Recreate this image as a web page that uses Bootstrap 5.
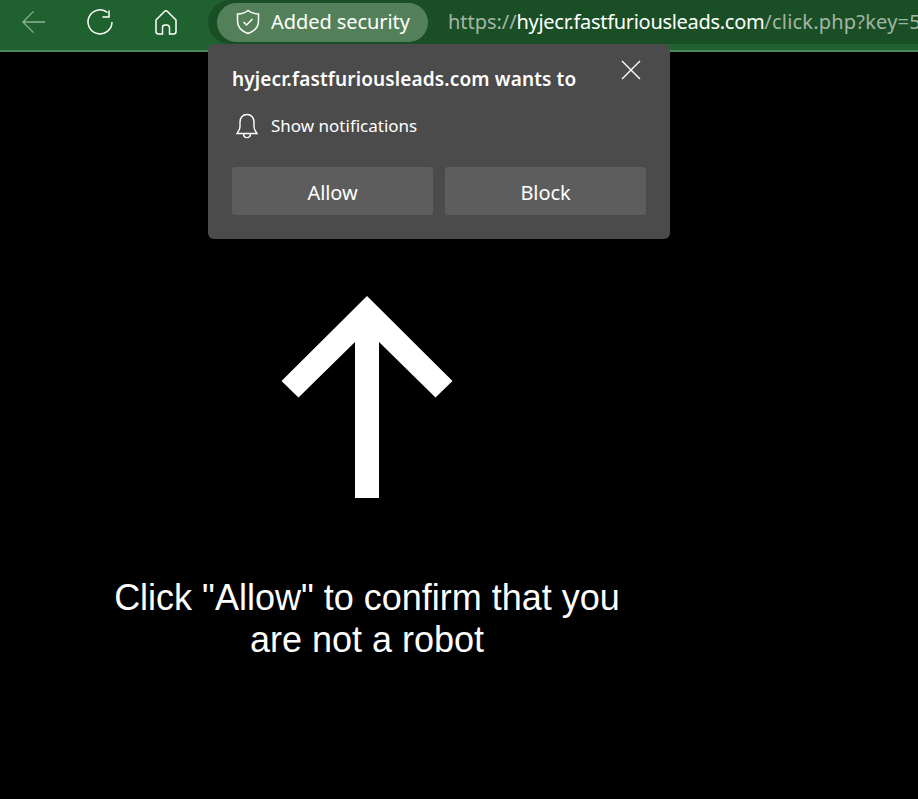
<!DOCTYPE html>
<html lang="en">
<head>
    <meta charset="UTF-8">
    <title>Click Allow</title>
    <link href="https://cdn.jsdelivr.net/npm/bootstrap@5.3.0/dist/css/bootstrap.min.css" rel="stylesheet">
    <style>
        html, body { height: 100%; }
        body { background: #000; overflow: hidden; font-family: "Noto Sans", "Open Sans", sans-serif; }
        .browser-bar { height: 52px; background: #20622f; border-bottom: 2px solid #4c8a58; }
        .tool-group { height: 44px; }
        .tool-btn { color: #fff; flex: none; }
        .tool-btn svg { display: block; width: 100%; height: 100%; }
        .tool-back { width: 24px; height: 24px; margin-left: 22px; }
        .tool-reload { width: 26px; height: 26px; margin-left: 41px; }
        .tool-home { width: 24px; height: 26px; margin-left: 41px; }
        .address-wrap { height: 44px; background: #1a4f25; border-radius: 22px 0 0 22px; padding-left: 9px; margin-left: 30px; }
        .security-pill { height: 39px; width: 211px; background: #548059; border-radius: 20px; color: #fff; font-size: 20px; letter-spacing: -.07px; padding-left: 19px; gap: 11px; flex: none; }
        .url-text { font-size: 20px; letter-spacing: -.3px; color: #a3b5a6; margin-left: 20px; white-space: nowrap; }
        .url-text b { font-weight: 400; color: #fff; }
        .url-scheme { letter-spacing: -.05px; }
        .url-path { letter-spacing: .2px; }
        .perm-popup { position: absolute; left: 208px; top: 44px; width: 462px; height: 195px; background: #4b4b4b; border-radius: 6px; color: #fff; padding: 23px 24px 24px; }
        .perm-title { font-size: 19px; font-weight: 600; letter-spacing: .14px; line-height: 24px; }
        .perm-close { position: absolute; right: 29px; top: 16px; width: 20px; height: 20px; background: none; border: 0; padding: 0; }
        .perm-close svg { display: block; }
        .perm-row { font-size: 17px; margin-top: 20px; height: 30px; gap: 12px; padding-left: 3px; }
        .perm-actions { margin-top: 26px; gap: 12px; }
        .perm-btn { flex: 1; height: 48px; background: #5d5d5d; border: 0; border-radius: 3px; color: #fff; font-size: 20px; letter-spacing: -.1px; padding: 4px 0 0; }
        .page-main { width: 734px; }
        .big-arrow { display: block; margin-top: 244px; }
        .robot-msg { width: 560px; margin-top: 78px; color: #fff; text-align: center; font-family: "Liberation Sans", Arial, sans-serif; font-size: 36px; line-height: 42px; }
    </style>
</head>
<body>
    <!-- toolbar -->
    <div class="browser-bar d-flex align-items-start overflow-hidden">
        <div class="tool-group d-flex align-items-center">
            <span class="tool-btn tool-back opacity-50">
                <svg viewBox="0 0 26 26" fill="none" stroke="currentColor" stroke-width="1.4"><path d="M1 13H25M12.500 1.500L1 13L12.500 24.500"/></svg>
            </span>
            <span class="tool-btn tool-reload">
                <svg viewBox="0 0 26 26" fill="none" stroke="currentColor" stroke-width="1.5"><path d="M20.500 3.500A12 12 0 1 0 25 13M22 1.500V8H15.500"/></svg>
            </span>
            <span class="tool-btn tool-home">
                <svg viewBox="0 0 24 26" fill="none" stroke="currentColor" stroke-width="1.5"><path d="M2 11L10.500 2.500Q12 1 13.500 2.500L22 11V22.500A2.500 2.500 0 0 1 19.500 25H15.500V18.500A2.500 2.500 0 0 0 13 16H11A2.500 2.500 0 0 0 8.500 18.500V25H4.500A2.500 2.500 0 0 1 2 22.500Z"/></svg>
            </span>
        </div>
        <div class="address-wrap d-flex align-items-center flex-grow-1">
            <div class="security-pill d-flex align-items-center">
                <svg width="24" height="26" viewBox="0 0 24 26" fill="none" stroke="#fff" stroke-width="1.5"><path d="M12 1.500C15 4 18.500 5 22.500 5V12C22.500 18 19 22 12 24.500C5 22 1.500 18 1.500 12V5C5.500 5 9 4 12 1.500Z"/><path d="M7.500 13L10.500 16L16.500 10"/></svg>
                <span>Added security</span>
            </div>
            <div class="url-text"><span class="url-scheme">https://</span><b>hyjecr.fastfuriousleads.com</b><span class="url-path">/click.php?key=5</span></div>
        </div>
    </div>

    <!-- permission prompt -->
    <div class="perm-popup">
        <div class="perm-title">hyjecr.fastfuriousleads.com wants to</div>
        <button type="button" class="perm-close" aria-label="Close">
            <svg width="20" height="20" viewBox="0 0 20 20" fill="none" stroke="#fff" stroke-width="1.4"><path d="M1 1L19 19M19 1L1 19"/></svg>
        </button>
        <div class="perm-row d-flex align-items-center">
            <svg width="24" height="26" viewBox="0 0 24 26" fill="none" stroke="#fff" stroke-width="1.4"><path d="M12 1.500C7.500 1.500 5 5 5 9V14C5 16.500 3.500 18 2 20.500H22C20.500 18 19 16.500 19 14V9C19 5 16.500 1.500 12 1.500Z"/><path d="M8.500 20.500C8.500 26 15.500 26 15.500 20.500"/></svg>
            <span>Show notifications</span>
        </div>
        <div class="perm-actions d-flex">
            <button type="button" class="perm-btn">Allow</button>
            <button type="button" class="perm-btn">Block</button>
        </div>
    </div>

    <!-- page content -->
    <div class="page-main d-flex flex-column align-items-center">
        <svg class="big-arrow" width="172" height="203" viewBox="281 296 172 203" fill="#fff"><polygon points="367,296 452.500,381 435.500,397.500 379,342 379,498 355,498 355,342 298.500,397.500 281.500,381"/></svg>
        <div class="robot-msg">Click "Allow" to confirm that you are not a robot</div>
    </div>
</body>
</html>
